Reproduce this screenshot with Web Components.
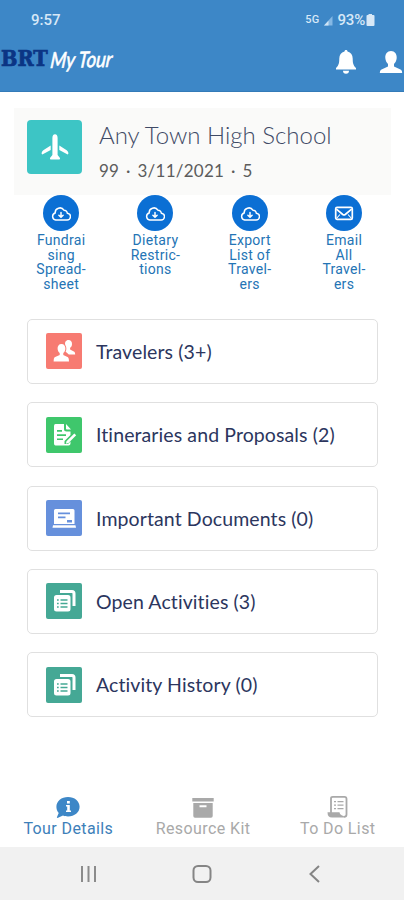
<!DOCTYPE html>
<html lang="en">
<head>
<meta charset="utf-8">
<title>BRT My Tour</title>
<style>
html,body{margin:0;padding:0;background:#fff}
body{width:404px;height:900px;overflow:hidden}
</style>
</head>
<body>
<tour-app></tour-app>
<script>
const define = (name, markup) => {
  customElements.define(name, class extends HTMLElement {
    connectedCallback() {
      if (this.shadowRoot) return;
      const t = document.createElement('template');
      t.innerHTML = typeof markup === 'function' ? markup(this) : markup;
      this.attachShadow({ mode: 'open' }).append(t.content.cloneNode(true));
    }
  });
};

const cloud = '<g fill="none" stroke="#fff" stroke-width="1.500" stroke-linejoin="round" stroke-linecap="round"><path d="M4.700 15H15.900A3.400 3.400 0 0 0 16.300 8.200 3.200 3.200 0 0 0 12.900 5.200 4.700 4.700 0 0 0 4.200 8 3.600 3.600 0 0 0 4.700 15Z"/><path d="M10 7.400V12M7.900 10.200 10 12.300 12.100 10.200"/></g>';
const stack = '<path d="M14 8.500H26Q28 8.500 28 10.500V23" fill="none" stroke="#fff" stroke-width="3"/><path fill="#fff" fill-rule="evenodd" d="M10.500 12H22Q24.500 12 24.500 14.500V26Q24.500 28.500 22 28.500H10.500Q8 28.500 8 26V14.500Q8 12 10.500 12ZM11 16.300V17.700H12.700V16.300ZM14.500 16.300V17.700H21.500V16.300ZM11 19.800V21.200H12.700V19.800ZM14.500 19.800V21.200H21.500V19.800ZM11 23.300V24.700H12.700V23.300ZM14.500 23.300V24.700H21.500V23.300Z"/>';
const icons = {
  bell: [22, 26, '<path fill="#fff" d="M11 1C12 1 12.500 1.700 12.500 2.600 16 3.400 17.600 6.200 17.700 9.500 17.800 14 18 16 21 19V20.500H1V19C4 16 4.200 14 4.300 9.500 4.400 6.200 6 3.400 9.500 2.600 9.500 1.700 10 1 11 1ZM8 21.800H14A3 3 0 0 1 8 21.800Z"/>'],
  user: [24, 24, '<path fill="#fff" d="M12 1C15.700 1 18 4 17.700 8 17.500 10.500 16.500 12.500 15 14V16.500L22 19.700Q23.200 20.400 23.200 23H.8Q.8 20.400 2 19.700L9 16.500V14C7.500 12.500 6.500 10.500 6.300 8 6 4 8.300 1 12 1Z"/>'],
  plane: [28, 28, '<path fill="#fff" d="M14 1.300Q16.600 1.500 16.600 5V22L19 25Q19.400 26.500 18 26.500H10Q8.600 26.500 9 25L11.400 22V5Q11.400 1.500 14 1.300ZM9.700 12.500V17L1.300 21.400Q.2 21 .8 19.200Q1.200 18 2.300 17.200ZM18.300 12.500V17L26.700 21.400Q27.800 21 27.200 19.200Q26.800 18 25.700 17.200Z"/>'],
  cloud: [20, 17, cloud],
  mail: [20, 16, '<g fill="none" stroke="#fff" stroke-width="1.700" stroke-linejoin="round"><rect x="1.700" y="2.300" width="16.600" height="12" rx="1.400"/><path d="M2.400 4.200 8.800 9.500Q10 10.300 11.200 9.500L17.600 4.200"/><path stroke-width="1.100" d="M2.400 13.500 6 9.500M17.600 13.500 14 9.500"/></g>'],
  people: [36, 36, '<g fill="#fff"><path d="M22.500 7C24.800 7 26.200 8.800 26 11.200 25.900 12.900 25.200 14 24.100 14.800V16.500L28.300 18.700Q29.200 19.200 29.200 21.500H22.800L20.300 19.200 19.600 18.700C20.700 17 20.700 14 19.300 12 18.500 9.400 19.800 7 22.500 7Z"/><path d="M15.500 11C18.100 11 19.600 13.100 19.400 15.800 19.300 17.700 18.500 19.100 17.300 20.100V22L22 24.200Q23 25 23 28.600H7.600Q7.600 25 8.600 24.200L13.700 22V20.100C12.500 19.100 11.700 17.700 11.600 15.800 11.400 13.100 12.900 11 15.500 11Z"/></g>'],
  contract: [36, 36, '<path fill="#fff" fill-rule="evenodd" d="M9.500 7H18V12Q18 14.500 20.500 14.500H24.500V18L18.500 24V27H22L24.500 24.500V26.500Q24.500 28.500 22.500 28.500H9.500Q8 28.500 8 26.500V9Q8 7 9.500 7ZM11 13V14.700H16V13ZM11 17.200V18.900H20V17.200ZM11 21.400V23.100H17V21.400Z"/><path fill="#fff" d="M20 7 25 12.500H20.800Q20 12.500 20 11.700ZM28.300 16.500 30.200 18.200 22.500 26 19.900 26.800 20.500 24.200Z"/>'],
  laptop: [36, 36, '<path fill="#fff" fill-rule="evenodd" d="M9.500 9H27Q28.500 9 28.500 10.500V24H8V10.500Q8 9 9.500 9ZM12 12.500V14.300H24V12.500ZM12 16.500V18.300H19.500V16.500ZM21 20V22.500H26V20Z"/><path fill="#fff" d="M7 25.300H29.500L30 27.700H6.500Z"/>'],
  stack: [36, 36, stack],
  info: [26, 24, '<path fill="#3d87c7" d="M13 1C19.500 1 24.600 5.200 24.600 10.800S19.500 20.500 13 20.500C11 20.500 9.500 20.200 8 19.600L2.500 22 1.800 21.400 3.700 17C2 15 1.400 13 1.400 10.800 1.400 5.200 6.500 1 13 1Z"/><path fill="#fff" d="M12 4.900H14.800V7.600H12ZM11 9H14.800V14.600H16V16.100H11V14.600H12.200V10.500H11Z"/>'],
  box: [24, 24, '<path fill="#a9a9a9" d="M1.300 2H22.700V5.500H1.300Z"/><path fill="#a9a9a9" fill-rule="evenodd" d="M2.300 7H21.700V20Q21.700 21.700 20 21.700H4Q2.300 21.700 2.300 20ZM8.500 9.300V11.300H15.500V9.300Z"/>'],
  scroll: [24, 25, '<path fill="none" stroke="#a9a9a9" stroke-width="1.800" d="M5 18V3.500Q5 1.800 6.700 1.800H18.500Q20.500 1.800 20.500 3.800V19.500Q20.500 21.800 18 21.800"/><path fill="#a9a9a9" d="M1.500 17.300H13.500Q13.500 20 16 20.500 18 20.500 18.500 22.500H6Q1.500 22.500 1.500 17.300ZM8 6H10V7.300H8ZM11.500 6H17.500V7.300H11.500ZM8 9.500H10V10.800H8ZM11.500 9.500H17.500V10.800H11.500ZM8 13H10V14.300H8ZM11.500 13H17.500V14.300H11.500Z"/>']
};
define('tour-icon', el => {
  const [w, h, body] = icons[el.getAttribute('name')];
  return `<style>:host{display:block;flex:none;width:${w}px;height:${h}px}svg{display:block}</style>
  <svg width="${w}" height="${h}" viewBox="0 0 ${w} ${h}">${body}</svg>`;
});

define('status-bar', `<style>
:host{display:flex;justify-content:space-between;align-items:center;height:40px;box-sizing:border-box;padding:0 29px 0 31px;color:#d7e8f7;font:500 15px/20px Roboto,sans-serif}
.r{display:flex;align-items:center}
.g{font-size:11px;letter-spacing:.3px;margin-right:3px}
.p{font-size:15px;letter-spacing:-.2px;margin:0 1px 0 5px}
svg{display:block}
</style><span>9:57</span><span class="r"><span class="g">5G</span><svg width="10" height="11"><path d="M1 10.500 9.500 1V10.500Z" fill="#85b8e4"/><path d="M1 10.500 5.500 5.700V10.500Z" fill="#cfe4f5"/></svg><span class="p">93%</span><svg width="9" height="12"><path d="M2.500 0H6V1H7.500Q8.500 1 8.500 2V11Q8.500 12 7.500 12H1.500Q.5 12 .5 11V2Q.5 1 1.500 1H2.500Z" fill="#d7e8f7"/></svg></span>`);

define('brand-logo', `<style>
:host{display:flex;align-items:baseline;height:34px;line-height:34px;margin-top:-8px}
.b{font:bold 23px/34px "DejaVu Serif Condensed","DejaVu Serif",serif;color:#0b3584;-webkit-text-stroke:.7px #0b3584;display:inline-block;width:49px;transform-origin:0 50%;transform:scaleX(.94);white-space:nowrap}
.m{font:italic 400 22px/34px Lato,sans-serif;color:#fff;-webkit-text-stroke:.6px #fff;display:inline-block;transform-origin:0 70%;transform:translateY(2px) rotate(-1deg) skewX(-7deg) scaleX(.84);white-space:nowrap}
</style><span class="b">BRT</span><span class="m">My Tour</span>`);

define('app-header', `<style>
:host{display:block;height:92px;background:#3d87c7;box-sizing:border-box;border-bottom:1px solid #347bb8;overflow:hidden}
.row{display:flex;height:44px;align-items:center;padding-left:1px}
.s{flex:1}.u{margin-left:22px;margin-right:1px}
</style><status-bar></status-bar><div class="row"><brand-logo></brand-logo><span class="s"></span><tour-icon name="bell"></tour-icon><tour-icon class="u" name="user"></tour-icon></div>`);

define('tour-summary', `<style>
:host{display:flex;box-sizing:border-box;height:87px;background:#fafaf9;padding:12px 13px;gap:17px}
.tile{flex:none;width:55px;height:54px;border-radius:4px;background:#3dc5c5;display:grid;place-items:center}
.t{font:300 24px/30px Lato,sans-serif;color:#3f4a66;white-space:nowrap}
.d{font:400 17px/22px Lato,sans-serif;color:#5c5c5c;letter-spacing:.25px;word-spacing:2.200px;white-space:pre;margin-top:10px}
</style><div class="tile"><tour-icon name="plane"></tour-icon></div><div><div class="t"><slot></slot></div><div class="d"><slot name="meta"></slot></div></div>`);

define('quick-action', el => `<style>
:host{display:flex;flex-direction:column;align-items:center;font:400 14px/14.600px Roboto,sans-serif;color:#2474b5;text-align:center;letter-spacing:.3px}
.c{width:36px;height:36px;border-radius:50%;background:#0b6fd4;display:grid;place-items:center;margin-bottom:2px}
</style><div class="c"><tour-icon name="${el.getAttribute('icon')}"></tour-icon></div><div><slot></slot></div>`);

define('section-row', el => `<style>
:host{display:flex;align-items:center;box-sizing:border-box;height:65px;border:1.500px solid #e0e0e0;border-radius:5px;padding-left:18px;gap:14px;font:400 19.500px/26px Lato,sans-serif;font-variant-ligatures:none;letter-spacing:.1px;color:#2c365e;white-space:nowrap}
.i{width:36px;height:36px;border-radius:2px;background:${el.getAttribute('color')}}
span{padding-top:1px}
</style><div class="i"><tour-icon name="${el.getAttribute('icon')}"></tour-icon></div><span><slot></slot></span>`);

define('tab-item', el => `<style>
:host{display:flex;flex-direction:column;align-items:center;justify-content:flex-end;color:${el.hasAttribute('active') ? '#3d80b9' : '#a9a9a9'};font:400 16px/19px Roboto,sans-serif;white-space:nowrap;letter-spacing:.4px}
span{margin-top:-1px}
</style><tour-icon name="${el.getAttribute('icon')}"></tour-icon><span><slot></slot></span>`);

define('system-nav', `<style>
:host{display:grid;grid-template-columns:repeat(3,113px);justify-content:center;align-items:center;justify-items:center;height:53px;background:#f1f1f1}
svg{display:block}
</style><svg width="20" height="20"><path d="M3 2V18M9.500 2V18M16 2V18" stroke="#8b8b8b" stroke-width="2"/></svg>
<svg width="20" height="20"><rect x="1.500" y="2" width="17" height="16" rx="4.500" fill="none" stroke="#858585" stroke-width="2"/></svg>
<svg width="20" height="20"><path d="M14 2 5.500 10 14 18" fill="none" stroke="#858585" stroke-width="2"/></svg>`);

define('tour-app', `<style>
:host{display:flex;flex-direction:column;width:404px;height:900px;background:#fff}
main{flex:1;padding:16px 13px 0 14px}
.actions{display:grid;grid-template-columns:repeat(4,94.300px)}
.list{display:grid;gap:18.300px;margin:27.600px 13px 0}
.tabs{display:grid;grid-template-columns:repeat(3,134.700px);height:58px;padding:0 0 9px 1px;box-sizing:border-box;align-items:end}
</style>
<app-header></app-header>
<main>
<tour-summary>Any Town High School<span slot="meta">99 · 3/11/2021 · 5</span></tour-summary>
<div class="actions">
<quick-action icon="cloud">Fundrai<br>sing<br>Spread-<br>sheet</quick-action>
<quick-action icon="cloud">Dietary<br>Restric-<br>tions</quick-action>
<quick-action icon="cloud">Export<br>List of<br>Travel-<br>ers</quick-action>
<quick-action icon="mail">Email<br>All<br>Travel-<br>ers</quick-action>
</div>
<div class="list">
<section-row icon="people" color="#f77b72">Travelers (3+)</section-row>
<section-row icon="contract" color="#3fc76c">Itineraries and Proposals (2)</section-row>
<section-row icon="laptop" color="#6690dc">Important Documents (0)</section-row>
<section-row icon="stack" color="#45a895">Open Activities (3)</section-row>
<section-row icon="stack" color="#45a895">Activity History (0)</section-row>
</div>
</main>
<div class="tabs"><tab-item active icon="info">Tour Details</tab-item><tab-item icon="box">Resource Kit</tab-item><tab-item icon="scroll">To Do List</tab-item></div>
<system-nav></system-nav>`);
</script>
</body>
</html>
